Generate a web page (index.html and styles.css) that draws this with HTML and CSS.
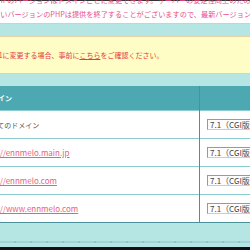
FILE: index.html
```html
<!DOCTYPE html>
<html lang="ja">
<head>
    <meta charset="UTF-8">
    <meta name="viewport" content="width=device-width, initial-scale=1.0">
    <title>PHPバージョン設定</title>
    <link rel="stylesheet" href="styles.css">
</head>
<body>
    <div class="page">
        <p class="notice">
            PHPのバージョンはドメインごとに変更できます。サーバーの安定性向上のため、<br>
            古いバージョンのPHPは提供を終了することがございますので、最新バージョンのご利用をおすすめします。
        </p>
        <div class="panel">
            <div class="alert">
                PHPのバージョンを7.1に変更する場合、事前に<a href="#">こちら</a>をご確認ください。
            </div>
            <table class="domains">
                <tr>
                    <th class="col-domain">ドメイン</th>
                    <th class="col-version">PHPバージョン</th>
                </tr>
                <tr>
                    <td class="col-domain plain">すべてのドメイン</td>
                    <td class="col-version"><select class="version"><option>7.1（CGI版）</option></select></td>
                </tr>
                <tr>
                    <td class="col-domain"><a href="#">https://ennmelo.main.jp</a></td>
                    <td class="col-version"><select class="version"><option>7.1（CGI版）</option></select></td>
                </tr>
                <tr>
                    <td class="col-domain"><a href="#">https://ennmelo.com</a></td>
                    <td class="col-version"><select class="version"><option>7.1（CGI版）</option></select></td>
                </tr>
                <tr>
                    <td class="col-domain"><a href="#">https://www.ennmelo.com</a></td>
                    <td class="col-version"><select class="version"><option>7.1（CGI版）</option></select></td>
                </tr>
            </table>
            <div class="panel-foot"></div>
        </div>
        <div class="footer"></div>
    </div>
</body>
</html>
```

FILE: styles.css
```css
body {
    margin: 0;
    background-color: white;
    overflow: hidden;
    font-family: "Noto Sans CJK JP", "Liberation Sans", sans-serif;
    font-size: 7px;
}
.page {
    width: 600px;
    margin-left: -80px;
    border-top: 1px solid #333;
}
.notice {
    margin: -8px 0 0 0;
    padding: 0 0 2px 73px;
    color: #e8508a;
    font-size: 7.2px;
    line-height: 14px;
    white-space: nowrap;
    border-bottom: 1px solid #cfcfcf;
}
.panel {
    background-color: #b5e6e3;
    padding-top: 12px;
    padding-bottom: 4px;
}
.alert {
    background-color: #fffdc6;
    border-top: 1px solid #e2d2a6;
    border-bottom: 1px solid #e2d2a6;
    color: #e53d3d;
    padding: 12px 10px;
    line-height: 12px;
}
.alert a {
    color: #e53d3d;
}
.domains {
    margin: 12px 0 0 54px;
    border-collapse: collapse;
    background-color: white;
    border-bottom: 1px solid #4a929b;
}
.domains th {
    background-color: #4da9b1;
    color: white;
    text-align: left;
    font-weight: bold;
    height: 24px;
    padding: 0 10px;
}
.domains td {
    height: 27px;
    padding: 0 10px;
    border-top: 1px solid #8ccbd0;
    color: #555;
}
.col-domain {
    width: 205px;
    border-right: 1px solid #4a929b;
}
.domains th.col-version {
    padding-left: 53px;
    width: 200px;
}
.domains td.col-version {
    padding-left: 7px;
}
.domains a {
    color: #e8607f;
    font-size: 8px;
    margin-left: -6px;
}
.version {
    appearance: none;
    font-family: "Noto Sans CJK JP", "Liberation Sans", sans-serif;
    font-size: 8px;
    line-height: 9px;
    color: #444;
    background-color: #fdfdfd;
    border: 1px solid #999;
    border-right-color: #ccc;
    border-bottom-color: #ccc;
    border-radius: 0;
    height: 11px;
    padding: 0 0 0 2px;
    width: 80px;
}
.panel-foot {
    height: 2px;
    margin-top: 18px;
    background: repeating-linear-gradient(90deg, #9fd7d3 0 14px, #8cc9c5 14px 16px);
}
.footer {
    height: 10px;
    background-color: #111;
}
```
